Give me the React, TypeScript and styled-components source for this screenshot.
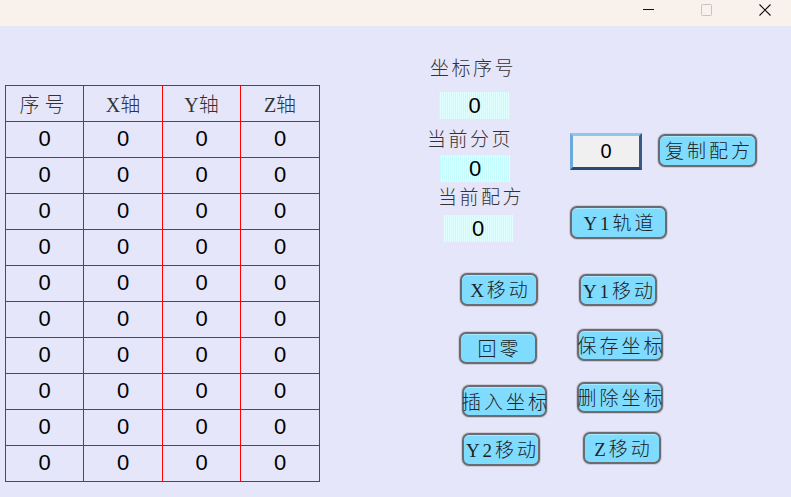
import styled, { createGlobalStyle } from "styled-components";

const GlobalStyle = createGlobalStyle`
  html, body {
    margin: 0;
    padding: 0;
    background: #e6e6fa;
  }
  * {
    box-sizing: border-box;
  }
`;

const CJK = `"Liberation Serif", "Noto Sans CJK SC", serif`;
const DIGIT = `"Liberation Sans", Arial, sans-serif`;

const headers = ["序号", "X轴", "Y轴", "Z轴"];
const rows = Array.from({ length: 10 }, () => [0, 0, 0, 0]);

// HMI widgets, positions taken from the screen designer (page coords)
const labels = [
  { text: "坐标序号", x: 430, y: 58 },
  { text: "当前分页", x: 427, y: 129 },
  { text: "当前配方", x: 438, y: 187 },
];

const values = [
  { x: 439, y: 92, w: 71 },
  { x: 440, y: 155, w: 70 },
  { x: 443, y: 215, w: 70 },
];

const buttons = [
  { text: "复制配方", x: 658, y: 134, w: 99, h: 33 },
  { text: "Y1轨道", x: 570, y: 206, w: 97, h: 33 },
  { text: "X移动", x: 460, y: 273, w: 78, h: 33 },
  { text: "Y1移动", x: 579, y: 274, w: 78, h: 32 },
  { text: "回零", x: 459, y: 332, w: 78, h: 32 },
  { text: "保存坐标", x: 577, y: 329, w: 86, h: 32 },
  { text: "插入坐标", x: 462, y: 385, w: 85, h: 32 },
  { text: "删除坐标", x: 577, y: 382, w: 86, h: 31 },
  { text: "Y2移动", x: 462, y: 433, w: 78, h: 33 },
  { text: "Z移动", x: 583, y: 432, w: 78, h: 32 },
];

const ORIGIN_X = 320;
const ORIGIN_Y = 26;

const Page = styled.div`
  width: 791px;
  height: 497px;
  display: flex;
  flex-direction: column;
  background: #e6e6fa;
  overflow: hidden;
`;

const TitleBar = styled.div`
  height: 26px;
  flex: none;
  background: #f9f1ec;
  display: flex;
  justify-content: flex-end;
  align-items: flex-start;
  gap: 46px;
  padding: 4px 20px 0 0;
`;

const WinControl = styled.div`
  width: 12px;
  height: 12px;
  display: flex;
`;

const Body = styled.div`
  flex: 1;
  display: flex;
`;

const TablePane = styled.div`
  padding: 59px 0 0 5px;
`;

const Grid = styled.div`
  display: grid;
  grid-template-columns: 78px 79px 78px 79px;
  grid-auto-rows: 36px;
  border-left: 1px solid #ff0000;
  border-top: 1px solid #ff0000;
  width: 315px;
`;

const Cell = styled.div<{ $head?: boolean; $spread?: boolean }>`
  border-right: 1px solid #ff0000;
  border-bottom: 1px solid #ff0000;
  display: flex;
  align-items: center;
  justify-content: center;
  padding-bottom: ${(p) => (p.$head ? "0" : "2px")};
  font-family: ${(p) => (p.$head ? CJK : DIGIT)};
  font-size: ${(p) => (p.$head ? "20px" : "22px")};
  font-weight: ${(p) => (p.$head ? 300 : 400)};
  letter-spacing: ${(p) => (p.$spread ? "5px" : "0")};
  color: ${(p) => (p.$head ? "#333" : "#000")};
`;

const WidgetCanvas = styled.div`
  flex: 1;
  position: relative;
`;

const Label = styled.div<{ $x: number; $y: number }>`
  position: absolute;
  left: ${(p) => p.$x - ORIGIN_X}px;
  top: ${(p) => p.$y - ORIGIN_Y}px;
  height: 22px;
  line-height: 22px;
  font-family: ${CJK};
  font-size: 19px;
  font-weight: 300;
  letter-spacing: 2.5px;
  color: #333;
  white-space: nowrap;
`;

const ValueBox = styled.div<{ $x: number; $y: number; $w: number }>`
  position: absolute;
  left: ${(p) => p.$x - ORIGIN_X}px;
  top: ${(p) => p.$y - ORIGIN_Y}px;
  width: ${(p) => p.$w}px;
  height: 27px;
  background: repeating-linear-gradient(
    90deg,
    #c4fbfd 0 1px,
    #e2ffff 1px 2px
  );
  display: flex;
  align-items: center;
  justify-content: center;
  font-family: ${DIGIT};
  font-size: 22px;
  color: #000;
`;

const InputBox = styled.div<{ $x: number; $y: number }>`
  position: absolute;
  left: ${(p) => p.$x - ORIGIN_X}px;
  top: ${(p) => p.$y - ORIGIN_Y}px;
  width: 72px;
  height: 37px;
  background: #f0f0f0;
  border: 3px solid;
  border-top-color: #8ec6f2;
  border-left-color: #6ea9de;
  border-bottom-color: #2b4a72;
  border-right-color: #375a86;
  display: flex;
  align-items: center;
  justify-content: center;
  font-family: ${DIGIT};
  font-size: 20px;
  color: #000;
`;

const HmiButton = styled.button<{ $x: number; $y: number; $w: number; $h: number }>`
  position: absolute;
  left: ${(p) => p.$x - ORIGIN_X}px;
  top: ${(p) => p.$y - ORIGIN_Y}px;
  width: ${(p) => p.$w}px;
  height: ${(p) => p.$h}px;
  margin: 0;
  padding: 0 0 2px 3px;
  background: #80dcff;
  border: 2px solid #6b6b70;
  border-radius: 7px;
  box-shadow: 0 0 0 1px #c9c9d9, inset 0 1px 0 #a8eaff;
  display: flex;
  align-items: center;
  justify-content: center;
  font-family: ${CJK};
  font-size: 19px;
  font-weight: 300;
  letter-spacing: 3px;
  color: #222;
  white-space: nowrap;
  cursor: pointer;
`;

export default function App() {
  return (
    <>
      <GlobalStyle />
      <Page>
        <TitleBar>
          <WinControl>
            <svg width="12" height="12" viewBox="0 0 12 12">
              <line x1="0" y1="5.5" x2="11" y2="5.5" stroke="#111" strokeWidth="1" />
            </svg>
          </WinControl>
          <WinControl>
            <svg width="12" height="12" viewBox="0 0 12 12">
              <rect x="0.5" y="0.5" width="10" height="11" rx="1" fill="none" stroke="#c4c4c4" strokeWidth="1" />
            </svg>
          </WinControl>
          <WinControl>
            <svg width="12" height="12" viewBox="0 0 12 12">
              <path d="M0.5 0.5 L11.5 11.5 M11.5 0.5 L0.5 11.5" stroke="#111" strokeWidth="1.1" />
            </svg>
          </WinControl>
        </TitleBar>
        <Body>
          <TablePane>
            <Grid>
              {headers.map((h) => (
                <Cell key={h} $head $spread={h === "序号"}>
                  {h}
                </Cell>
              ))}
              {rows.map((r, i) =>
                r.map((v, j) => <Cell key={`${i}-${j}`}>{v}</Cell>)
              )}
            </Grid>
          </TablePane>
          <WidgetCanvas>
            {labels.map((l) => (
              <Label key={l.text} $x={l.x} $y={l.y}>
                {l.text}
              </Label>
            ))}
            {values.map((v, i) => (
              <ValueBox key={i} $x={v.x} $y={v.y} $w={v.w}>
                0
              </ValueBox>
            ))}
            <InputBox $x={570} $y={133}>0</InputBox>
            {buttons.map((b) => (
              <HmiButton key={b.text} $x={b.x} $y={b.y} $w={b.w} $h={b.h}>
                {b.text}
              </HmiButton>
            ))}
          </WidgetCanvas>
        </Body>
      </Page>
    </>
  );
}
